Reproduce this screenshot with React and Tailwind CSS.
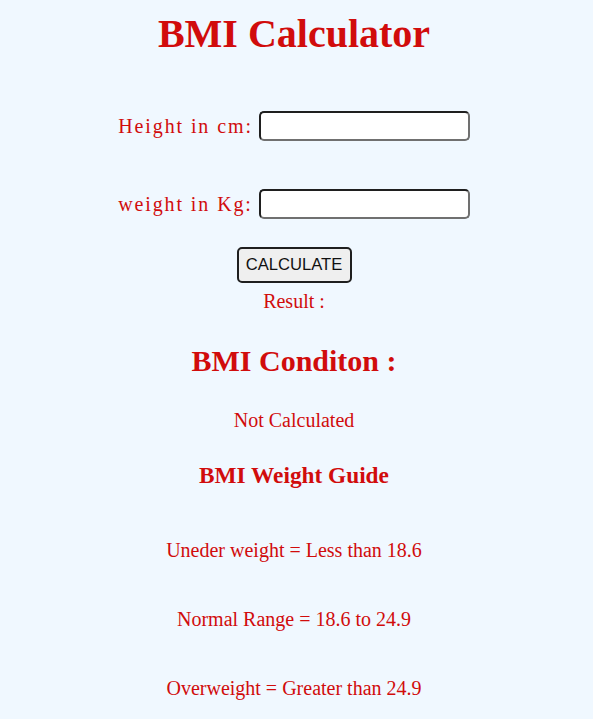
export default function App() {
    const guide = [
        { text: 'Uneder weight = Less than 18.6', mt: 'mt-[49px]' },
        { text: 'Normal Range = 18.6 to 24.9', mt: 'mt-[45px]' },
        { text: 'Overweight = Greater than 24.9', mt: 'mt-[45px]' },
    ];

    return (
        <div className="min-h-[719px] bg-[#f0f8ff] text-[#d10c0c] font-['Liberation_Serif','Times_New_Roman',serif]">
            <div className="w-[588px] flex flex-col items-center text-center">
                <h1 className="mt-[10px] text-[40px] leading-[48px] font-bold">BMI Calculator</h1>

                <div className="mt-[53px] flex items-center gap-[6px]">
                    <label className="text-[20px] leading-[30px] tracking-[1.9px]">Height in cm:</label>
                    <input type="text" className="w-[211px] h-[30px] bg-white rounded-[5px] border-2 border-[#1f1f1f] border-r-[#707070] border-b-[#707070] outline-none px-1" />
                </div>

                <div className="mt-[48px] flex items-center gap-[6px]">
                    <label className="text-[20px] leading-[30px] tracking-[1.9px]">weight in Kg:</label>
                    <input type="text" className="w-[211px] h-[30px] bg-white rounded-[5px] border-2 border-[#1f1f1f] border-r-[#707070] border-b-[#707070] outline-none px-1" />
                </div>

                <button className="mt-[28px] w-[115px] h-[36px] bg-[#efefef] border-2 border-[#1f1f1f] rounded-[5px] text-[16.6px] text-[#111] font-['Liberation_Sans',Arial,sans-serif]">
                    CALCULATE
                </button>

                <p className="mt-[6px] text-[20px] leading-[24px]">Result :</p>

                <h2 className="mt-[30px] text-[30px] leading-[36px] font-bold">BMI Conditon :</h2>

                <p className="mt-[29px] text-[20px] leading-[24px]">Not Calculated</p>

                <h3 className="mt-[29px] text-[23.3px] leading-[28px] font-bold">BMI Weight Guide</h3>

                {guide.map((item) => (
                    <p key={item.text} className={`${item.mt} text-[20px] leading-[24px]`}>
                        {item.text}
                    </p>
                ))}
            </div>
        </div>
    );
}
